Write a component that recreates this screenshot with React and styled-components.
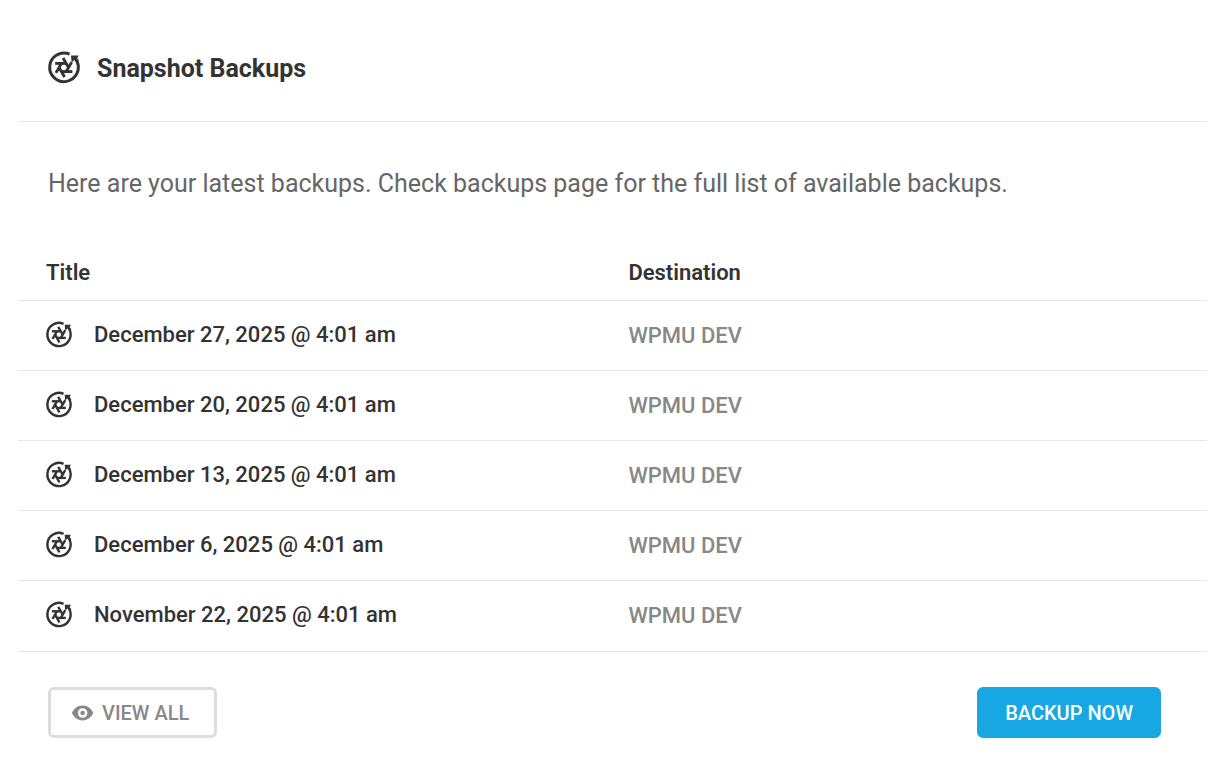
import React from 'react';
import styled, { createGlobalStyle } from 'styled-components'

const GlobalStyle = createGlobalStyle`
    * {
        box-sizing: border-box;
    }
    body {
        margin: 0;
        background: #fff;
        color: #333;
        font-family: Roboto, "Liberation Sans", sans-serif;
    }
`

const Box = styled.section`
    margin: 0 13px 0 18px;
    padding-top: 14px;
`

const BoxHeader = styled.header`
    display: flex;
    align-items: center;
    gap: 17px;
    height: 108px;
    padding: 0 30px;
    border-bottom: 1px solid #e6e6e6;
`

const BoxTitle = styled.h3`
    margin: 0;
    padding-top: 2px;
    font-size: 25px;
    line-height: 40px;
    font-weight: 700;
`

const Description = styled.p`
    margin: 0;
    padding: 41px 30px 39px;
    color: #666;
    font-size: 25px;
    line-height: 42px;
`

const Table = styled.table`
    width: 100%;
    margin-bottom: 1px;
    table-layout: fixed;
    border-collapse: collapse;
    text-align: left;
`

const HeadCell = styled.th`
    width: ${props => props.$wide ? "51%" : "49%"};
    height: 56px;
    padding: 2px 4px 0 ${props => props.$wide ? 28 : 4}px;
    border-bottom: 1px solid #e6e6e6;
    font-size: 22px;
    line-height: 30px;
    font-weight: 600;
`

const Cell = styled.td`
    height: 70px;
    padding: 2px 4px 0;
    border-bottom: 1px solid #e6e6e6;
    color: #888;
    font-size: 22px;
    line-height: 30px;
    font-weight: 500;
    tr:last-child > & {
        border-bottom: none;
    }
`

const TitleCell = styled(Cell)`
    padding: 0 4px 0 28px;
    color: #333;
`

const BackupName = styled.div`
    display: flex;
    align-items: center;
    gap: 22px;
`

const BoxFooter = styled.footer`
    display: flex;
    align-items: center;
    justify-content: space-between;
    padding: 35px 46px 36px 30px;
    border-top: 1px solid #e6e6e6;
`

const Button = styled.button`
    display: flex;
    align-items: center;
    gap: 8px;
    height: 51px;
    padding: 1px 25px 0 ${props => props.$ghost ? 21 : 25}px;
    border: 3px solid ${props => props.$ghost ? "#ddd" : "#17a8e3"};
    border-radius: 6px;
    background: ${props => props.$ghost ? "transparent" : "#17a8e3"};
    color: ${props => props.$ghost ? "#888" : "#fff"};
    font-family: inherit;
    font-size: 20px;
    line-height: 28px;
    font-weight: 500;
    text-transform: uppercase;
    cursor: pointer;
`

const Icon = styled.svg`
    flex: none;
    width: ${props => props.$size}px;
    height: ${props => props.$size}px;
    overflow: visible;
`

const blades = [0, 60, 120, 180, 240, 300]

function SnapshotIcon({ size }) {
    return (
        <Icon $size={size} viewBox="0 0 32 32" fill="none" stroke="#333" aria-hidden="true">
            <path d="M21.6 2.2A14.3 14.3 0 1 0 28.6 8.6" strokeWidth="3" />
            <path d="M23 3.4H30.6L29.2 6.2L31.2 9.2L28.4 10.8L26.4 8L23.6 10.4Z" fill="#333" stroke="none" />
            {blades.map(angle => (
                <path
                    key={angle}
                    d="M18 11.4L7.2 11.4"
                    strokeWidth="2.9"
                    transform={`rotate(${angle} 15.8 15.5)`}
                />
            ))}
        </Icon>
    );
}

function EyeIcon() {
    return (
        <Icon $size={22} viewBox="0 0 22 22" aria-hidden="true">
            <path
                d="M10.6 3.6C5.4 3.6 1.6 7 0 11C1.6 15 5.4 18.4 10.6 18.4S19.6 15 21.2 11C19.6 7 15.8 3.6 10.6 3.6ZM10.6 6.2A4.8 4.8 0 1 1 10.6 15.8A4.8 4.8 0 1 1 10.6 6.2Z"
                fill="#888"
                fillRule="evenodd"
            />
            <circle cx="10.6" cy="11" r="2.2" fill="#888" />
        </Icon>
    );
}

const backups = [
    'December 27, 2025 @ 4:01 am',
    'December 20, 2025 @ 4:01 am',
    'December 13, 2025 @ 4:01 am',
    'December 6, 2025 @ 4:01 am',
    'November 22, 2025 @ 4:01 am',
]

function App() {
    return (
        <>
            <GlobalStyle />
            <Box>
                <BoxHeader>
                    <SnapshotIcon size={32} />
                    <BoxTitle>Snapshot Backups</BoxTitle>
                </BoxHeader>

                <Description>
                    Here are your latest backups. Check backups page for the full list of available backups.
                </Description>

                <Table>
                    <thead>
                        <tr>
                            <HeadCell scope="col" $wide>Title</HeadCell>
                            <HeadCell scope="col">Destination</HeadCell>
                        </tr>
                    </thead>
                    <tbody>
                        {backups.map(name => (
                            <tr key={name}>
                                <TitleCell>
                                    <BackupName>
                                        <SnapshotIcon size={26} />
                                        {name}
                                    </BackupName>
                                </TitleCell>
                                <Cell>WPMU DEV</Cell>
                            </tr>
                        ))}
                    </tbody>
                </Table>

                <BoxFooter>
                    <Button type="button" $ghost>
                        <EyeIcon />
                        View all
                    </Button>
                    <Button type="button">Backup now</Button>
                </BoxFooter>
            </Box>
        </>
    );
}

export default App;
